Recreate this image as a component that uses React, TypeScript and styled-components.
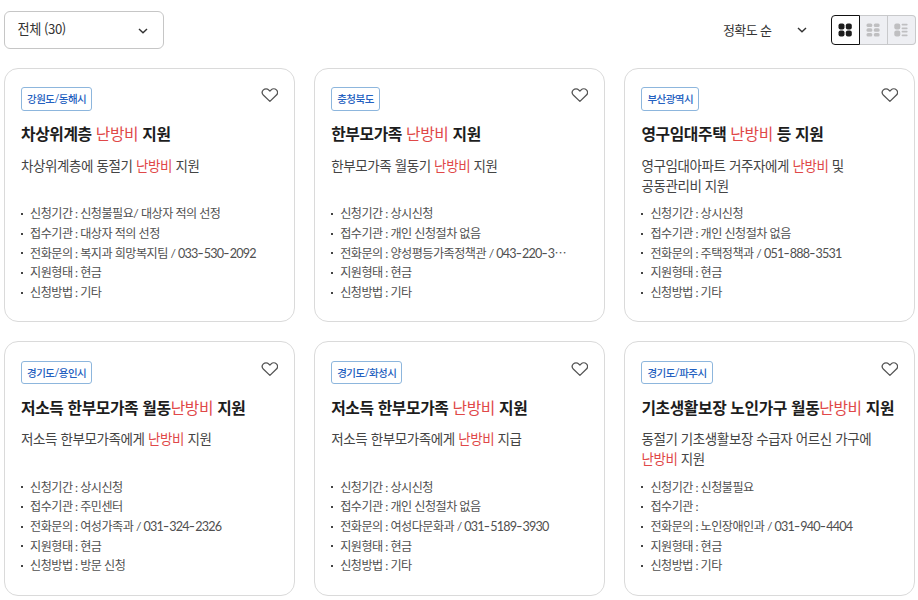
import React from "react";
import styled, { createGlobalStyle } from "styled-components";

const GlobalStyle = createGlobalStyle`
  * { box-sizing: border-box; }
  body {
    margin: 0;
    background: #fff;
    color: #333;
    font-family: "Lato", "Noto Sans CJK KR", sans-serif;
  }
`;

const Page = styled.main`
  width: 918px;
  height: 600px;
  overflow: hidden;
  padding: 11px 2px 0 4px;
`;

const Toolbar = styled.div`
  display: flex;
  justify-content: space-between;
  height: 57px;
`;

const FilterSelect = styled.button`
  display: flex;
  align-items: center;
  justify-content: space-between;
  width: 160px;
  height: 38px;
  padding: 1px 15px 0 12.5px;
  border: 1px solid #c6c6c6;
  border-radius: 6px;
  background: #fff;
  color: #333;
  font: 400 13.2px/20px "Noto Sans CJK KR", sans-serif;
  letter-spacing: -0.45px;
`;

const SelectLabel = styled.span`
  margin-top: -3px;
`;

const ToolbarRight = styled.div`
  display: flex;
  align-items: center;
  height: 38px;
`;

const SortSelect = styled.button`
  display: flex;
  align-items: center;
  justify-content: space-between;
  width: 84px;
  margin-right: 24px;
  padding: 0;
  border: 0;
  background: none;
  color: #333;
  font: 400 13px/20px "Noto Sans CJK KR", sans-serif;
  letter-spacing: -0.6px;
`;

const ViewSwitch = styled.div`
  display: flex;
  height: 30px;
`;

const ViewButton = styled.button<{ $active?: boolean }>`
  display: flex;
  align-items: center;
  justify-content: center;
  width: ${(p) => (p.$active ? 29 : 28)}px;
  height: 30px;
  padding: 0 1px 0 0;
  border: 1px solid ${(p) => (p.$active ? "#111" : "#c8c9cb")};
  border-left-width: ${(p) => (p.$active ? 1 : 0)}px;
  background: ${(p) => (p.$active ? "#fff" : "#eeeff3")};
  color: ${(p) => (p.$active ? "#1d1d1d" : "#bfbfc1")};
  &:first-child { border-radius: 4px 0 0 4px; }
  &:last-child { border-radius: 0 4px 4px 0; }
`;

const CardGrid = styled.div`
  display: grid;
  grid-template-columns: repeat(3, 291px);
  grid-template-rows: 254.2px 254.4px;
  gap: 19.2px;
`;

const CardBox = styled.article`
  display: flex;
  flex-direction: column;
  padding: 18.3px 16px 0;
  border: 1px solid #dadada;
  border-radius: 14px;
  background: #fff;
`;

const CardHead = styled.div`
  display: flex;
  align-items: flex-start;
  justify-content: space-between;
  height: 23.3px;
`;

const RegionTag = styled.span`
  height: 23.3px;
  padding: 0 5px;
  border: 1px solid #8db6dd;
  border-radius: 3px;
  color: #2360c0;
  font-size: 10.5px;
  font-weight: 500;
  line-height: 22.6px;
  letter-spacing: -0.5px;
`;

const LikeButton = styled.button`
  display: flex;
  padding: 0;
  border: 0;
  background: none;
  color: #555;
`;

const Title = styled.h3`
  margin: 11.6px 0 0;
  color: #1d1d1d;
  font-family: "Noto Sans CJK KR", sans-serif;
  font-size: 15.8px;
  font-weight: 700;
  line-height: 24px;
  letter-spacing: -0.38px;
  white-space: nowrap;
`;

const Description = styled.p`
  height: 40px;
  margin: 8.8px 0 0;
  color: #444;
  font-family: "Noto Sans CJK KR", sans-serif;
  font-size: 13.5px;
  line-height: 20px;
  letter-spacing: -0.4px;
  white-space: pre-line;
`;

const Keyword = styled.em`
  color: #e04848;
  font-style: normal;
  font-weight: 400;
`;

const InfoList = styled.ul`
  margin: 9.2px 0 0;
  padding: 0;
  list-style: none;
`;

const InfoItem = styled.li`
  display: flex;
  align-items: center;
  height: 19.7px;
  color: #505050;
  font-size: 12.1px;
  line-height: 19.7px;
  letter-spacing: -0.5px;
  white-space: pre;
  &::before {
    content: "";
    width: 2px;
    height: 2px;
    margin-right: 7px;
    background: #444;
  }
`;

const Digits = styled.span`
  font-size: 12.6px;
  line-height: 1;
  letter-spacing: -0.8px;
`;

const Dash = styled.span`
  font-family: "Inter", sans-serif;
  font-size: 13.5px;
  line-height: 1;
  letter-spacing: 0.1px;
`;

const Ellipsis = styled.span`
  font-family: "Noto Sans CJK KR", sans-serif;
  line-height: 1;
`;

const Chevron = () => (
  <svg width="10" height="6" viewBox="0 0 10 6" fill="none">
    <path d="M1 .9 5 4.8 9 .9" stroke="#333" strokeWidth="1.4" />
  </svg>
);

const Heart = () => (
  <svg width="17" height="16" viewBox="0 0 17 16" fill="none">
    <path
      d="M8.9 14.4 2.5 8.3C.9 6.7.9 4.4 2.4 2.9S6.2 1.4 7.7 2.9L8.9 4l1.2-1.1c1.5-1.5 3.8-1.5 5.3 0s1.4 3.8-.2 5.4Z"
      stroke="currentColor"
      strokeWidth="1.3"
      strokeLinejoin="round"
    />
  </svg>
);

const GridIcon = () => (
  <svg width="14" height="14" viewBox="0 0 14 14" fill="currentColor">
    <rect x=".5" y=".5" width="6" height="6" rx="2" />
    <rect x="7.8" y=".5" width="6" height="6" rx="2" />
    <rect x=".5" y="7.5" width="6" height="6" rx="2" />
    <rect x="7.8" y="7.5" width="6" height="6" rx="2" />
  </svg>
);

const CompactIcon = () => (
  <svg width="14" height="14" viewBox="0 0 14 14" fill="currentColor">
    {[0.5, 5.3, 10].map((y) => (
      <React.Fragment key={y}>
        <rect x=".5" y={y} width="5.8" height="3.5" rx="1.5" />
        <rect x="7.8" y={y} width="5.8" height="3.5" rx="1.5" />
      </React.Fragment>
    ))}
  </svg>
);

const DetailIcon = () => (
  <svg width="14" height="14" viewBox="0 0 14 14" fill="currentColor">
    <rect x=".3" y=".5" width="6" height="6" rx="2" />
    <rect x=".3" y="7.5" width="6" height="6" rx="2" />
    {[0.8, 4.4, 7.8, 11.4].map((y) => (
      <rect key={y} x="7.6" y={y} width="6" height="1.8" rx=".8" />
    ))}
  </svg>
);

const KEYWORD = "난방비";

const Highlighted = ({ text }: { text: string }) => (
  <>
    {text.split(KEYWORD).map((part, i) => (
      <React.Fragment key={i}>
        {i > 0 && <Keyword>{KEYWORD}</Keyword>}
        {part}
      </React.Fragment>
    ))}
  </>
);

const InfoText = ({ text }: { text: string }) => (
  <span>
    {text.split(/(-|⋯|\d+)/).map((part, i) => {
      if (part === "-") return <Dash key={i}>-</Dash>;
      if (part === "⋯") return <Ellipsis key={i}>⋯</Ellipsis>;
      if (/^\d+$/.test(part)) return <Digits key={i}>{part}</Digits>;
      return part;
    })}
  </span>
);

interface Benefit {
  region: string;
  title: string;
  description: string;
  info: [string, string, string, string, string];
}

const LABELS = ["신청기간", "접수기관", "전화문의", "지원형태", "신청방법"];

const benefits: Benefit[] = [
  {
    region: "강원도/동해시",
    title: "차상위계층 난방비 지원",
    description: "차상위계층에 동절기 난방비 지원",
    info: ["신청불필요/ 대상자 적의 선정", "대상자 적의 선정", "복지과 희망복지팀 / 033-530-2092", "현금", "기타"],
  },
  {
    region: "충청북도",
    title: "한부모가족 난방비 지원",
    description: "한부모가족 월동기 난방비 지원",
    info: ["상시신청", "개인 신청절차 없음", "양성평등가족정책관 / 043-220-3⋯", "현금", "기타"],
  },
  {
    region: "부산광역시",
    title: "영구임대주택 난방비 등 지원",
    description: "영구임대아파트 거주자에게 난방비 및\n공동관리비 지원",
    info: ["상시신청", "개인 신청절차 없음", "주택정책과 / 051-888-3531", "현금", "기타"],
  },
  {
    region: "경기도/용인시",
    title: "저소득 한부모가족 월동난방비 지원",
    description: "저소득 한부모가족에게 난방비 지원",
    info: ["상시신청", "주민센터", "여성가족과 / 031-324-2326", "현금", "방문 신청"],
  },
  {
    region: "경기도/화성시",
    title: "저소득 한부모가족 난방비 지원",
    description: "저소득 한부모가족에게 난방비 지급",
    info: ["상시신청", "개인 신청절차 없음", "여성다문화과 / 031-5189-3930", "현금", "기타"],
  },
  {
    region: "경기도/파주시",
    title: "기초생활보장 노인가구 월동난방비 지원",
    description: "동절기 기초생활보장 수급자 어르신 가구에\n난방비 지원",
    info: ["신청불필요", "", "노인장애인과 / 031-940-4404", "현금", "기타"],
  },
];

const BenefitCard = ({ benefit }: { benefit: Benefit }) => (
  <CardBox>
    <CardHead>
      <RegionTag>{benefit.region}</RegionTag>
      <LikeButton aria-label="관심 등록">
        <Heart />
      </LikeButton>
    </CardHead>
    <Title>
      <Highlighted text={benefit.title} />
    </Title>
    <Description>
      <Highlighted text={benefit.description} />
    </Description>
    <InfoList>
      {LABELS.map((label, i) => (
        <InfoItem key={label}>
          <InfoText text={`${label} : ${benefit.info[i]}`} />
        </InfoItem>
      ))}
    </InfoList>
  </CardBox>
);

export default function App() {
  return (
    <>
      <GlobalStyle />
      <Page lang="ko">
        <Toolbar>
          <FilterSelect>
            <SelectLabel>전체 (30)</SelectLabel>
            <Chevron />
          </FilterSelect>
          <ToolbarRight>
            <SortSelect>
              <span>정확도 순</span>
              <Chevron />
            </SortSelect>
            <ViewSwitch>
              <ViewButton $active aria-label="카드형"><GridIcon /></ViewButton>
              <ViewButton aria-label="간략형"><CompactIcon /></ViewButton>
              <ViewButton aria-label="상세형"><DetailIcon /></ViewButton>
            </ViewSwitch>
          </ToolbarRight>
        </Toolbar>
        <CardGrid>
          {benefits.map((benefit) => (
            <BenefitCard key={benefit.region} benefit={benefit} />
          ))}
        </CardGrid>
      </Page>
    </>
  );
}
